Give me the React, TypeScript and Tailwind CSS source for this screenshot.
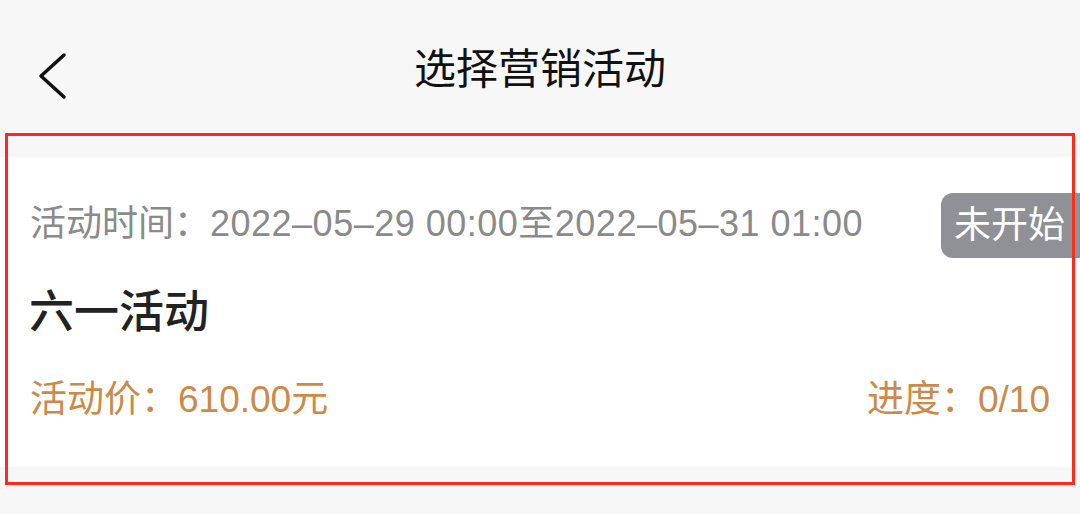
export default function App() {
  return (
    <div
      className="relative w-[1080px] h-[514px] overflow-hidden bg-[#f7f7f7]"
      style={{ fontFamily: '"Liberation Sans", "Noto Sans CJK SC", sans-serif' }}
    >
      {/* Header */}
      <div className="relative flex h-[146px] items-center justify-center pb-[2px]">
        <button className="absolute left-[36px] top-[50px] h-[52px] w-[36px]">
          <svg width="36" height="52" viewBox="0 0 36 52">
            <polyline
              points="28,5 5,26 28,47"
              fill="none"
              stroke="#111"
              strokeWidth="3.5"
              strokeLinecap="round"
              strokeLinejoin="round"
            />
          </svg>
        </button>
        <h1 className="-mt-[4px] text-[42px] font-normal leading-none text-[#111]">选择营销活动</h1>
      </div>

      {/* Activity card */}
      <div className="mt-[11px] flex flex-col bg-white pb-[43px] pt-[36px]">
        <div className="flex items-center justify-between">
          <div className="-mt-[3px] pl-[30px] text-[36px] leading-none text-[#8a8a8a]">
            活动时间：<span className="tracking-[0.5px]">2022–05–29 00:00至2022–05–31 01:00</span>
          </div>
          <div className="flex h-[65px] w-[139px] items-center rounded-l-[12px] bg-[#8f9196] pl-[13px] text-[37px] leading-none text-white">
            未开始
          </div>
        </div>
        <div className="mt-[25px] pl-[29px] text-[45px] font-medium leading-[60px] text-[#222]">六一活动</div>
        <div className="mt-[33px] flex items-center justify-between px-[30px] text-[37px] leading-[48px] text-[#cc8a4a]">
          <span>活动价：610.00元</span>
          <span>进度：0/10</span>
        </div>
      </div>

      {/* Red highlight frame */}
      <div className="pointer-events-none absolute left-[5px] top-[133px] h-[352px] w-[1070px] border-[3px] border-[#ff2a1f]" />
    </div>
  );
}
